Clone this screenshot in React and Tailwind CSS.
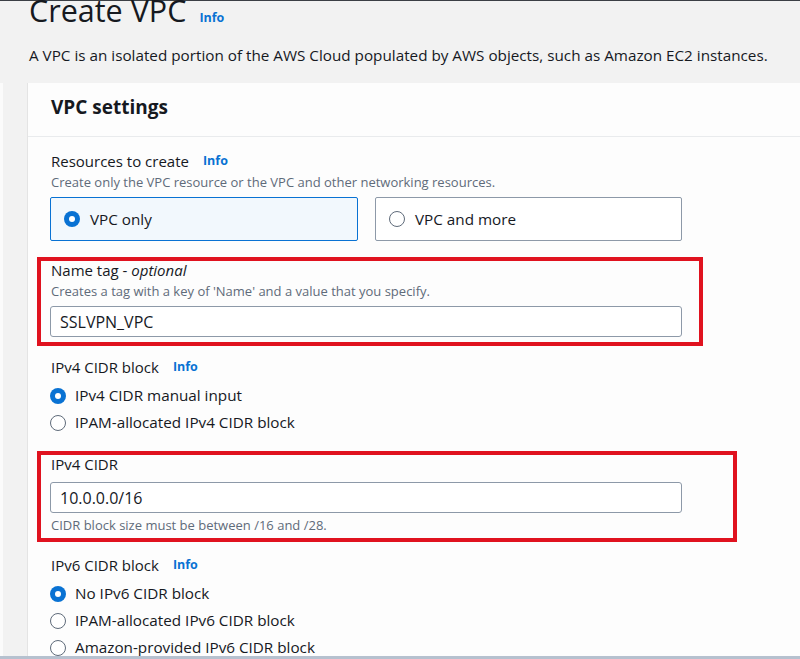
import React from "react";

const font = { fontFamily: '"Open Sans", "Noto Sans", Arial, sans-serif' };

function RadioOn({ className = "" }) {
  return (
    <span className={"flex h-[16px] w-[16px] shrink-0 items-center justify-center rounded-full bg-[#0972d3] " + className}>
      <span className="h-[6px] w-[6px] rounded-full bg-white" />
    </span>
  );
}

function RadioOff({ className = "" }) {
  return <span className={"h-[16px] w-[16px] shrink-0 rounded-full border border-[#5f6b7a] bg-white " + className} />;
}

function Info() {
  return <span className="ml-[14px] text-[12.5px] font-bold text-[#0972d3]">Info</span>;
}

function Label({ children, info }) {
  return (
    <div className="flex h-[20px] items-center pl-px text-[15px] text-[#16191f]">
      <span>{children}</span>
      {info && <Info />}
    </div>
  );
}

function Desc({ children }) {
  return <div className="flex h-[16px] items-center pl-px text-[13px] text-[#5f6b7a]">{children}</div>;
}

function RadioRow({ on, children }) {
  return (
    <div className="flex h-[27px] items-center gap-[9px] text-[15.25px] text-[#16191f]">
      {on ? <RadioOn /> : <RadioOff />}
      <span>{children}</span>
    </div>
  );
}

function Input({ value }) {
  return (
    <div className="flex h-[31px] w-[632px] items-center rounded-[3px] border border-[#8d99a8] bg-white pl-[9px] text-[16px] text-[#16191f]">
      {value}
    </div>
  );
}

export default function App() {
  return (
    <div style={font} className="relative h-[659px] w-[800px] overflow-hidden bg-[#f2f2f2]">
      <div className="h-px bg-[#3b3f45]" />
      <div className="pl-[29px]">
        <div className="mt-[-11px] flex items-baseline">
          <h1 className="text-[30.5px] leading-[40px] font-normal text-[#16191f]">Create VPC</h1>
          <span className="ml-[13px] text-[12.5px] font-bold text-[#0972d3]">Info</span>
        </div>
        <p className="mt-[14px] h-[22px] text-[15.25px] leading-[22px] whitespace-nowrap text-[#16191f]">
          A VPC is an isolated portion of the AWS Cloud populated by AWS objects, such as Amazon EC2 instances.
        </p>
      </div>
      <div className="mt-[17px] flex">
        <div className="h-[600px] w-[3px] bg-[#fbfbfb]" />
        <div className="w-[24px]" />
        <div className="flex-1 border-l border-[#e4e4e4] bg-[#fdfdfd]">
          <div className="h-[54px] border-b border-[#e9ebed] pl-[23px] pt-[10px] text-[19px] leading-[28px] font-bold text-[#16191f]">
            VPC settings
          </div>
          <div className="pl-[22px] pt-[14px]">
            <Label info>Resources to create</Label>
            <div className="mt-[4px]">
              <Desc>Create only the VPC resource or the VPC and other networking resources.</Desc>
            </div>
            <div className="mt-[6px] flex gap-[17px]">
              <div className="flex h-[44px] w-[308px] items-center gap-[10px] rounded-[2px] border border-[#0972d3] bg-[#f2f8fd] pl-[13px] text-[15.25px] text-[#16191f]">
                <RadioOn />
                <span>VPC only</span>
              </div>
              <div className="flex h-[44px] w-[307px] items-center gap-[10px] rounded-[2px] border border-[#8d99a8] bg-white pl-[13px] text-[15.25px] text-[#16191f]">
                <RadioOff />
                <span>VPC and more</span>
              </div>
            </div>

            <div className="relative mt-[19px]">
              <div className="pointer-events-none absolute left-[-13px] top-[-3px] h-[89px] w-[666px] border-4 border-[#e0121f]" />
              <div className="flex h-[20px] items-center pl-px text-[15px] text-[#16191f]">
                Name tag -&nbsp;<span className="italic">optional</span>
              </div>
              <div className="mt-[4px]">
                <Desc>Creates a tag with a key of 'Name' and a value that you specify.</Desc>
              </div>
              <div className="mt-[6px]">
                <Input value="SSLVPN_VPC" />
              </div>
            </div>

            <div className="mt-[20px]">
              <Label info>IPv4 CIDR block</Label>
            </div>
            <div className="mt-[5px]">
              <RadioRow on>IPv4 CIDR manual input</RadioRow>
              <RadioRow>IPAM-allocated IPv4 CIDR block</RadioRow>
            </div>

            <div className="relative mt-[18px]">
              <div className="pointer-events-none absolute left-[-13px] top-[-3px] h-[91px] w-[700px] border-4 border-[#e0121f]" />
              <Label>IPv4 CIDR</Label>
              <div className="mt-[8px]">
                <Input value="10.0.0.0/16" />
              </div>
              <div className="mt-[5px]">
                <Desc>CIDR block size must be between /16 and /28.</Desc>
              </div>
            </div>

            <div className="mt-[21px]">
              <Label info>IPv6 CIDR block</Label>
            </div>
            <div className="mt-[5px]">
              <RadioRow on>No IPv6 CIDR block</RadioRow>
              <RadioRow>IPAM-allocated IPv6 CIDR block</RadioRow>
              <RadioRow>Amazon-provided IPv6 CIDR block</RadioRow>
            </div>
          </div>
        </div>
      </div>
      <div className="absolute bottom-0 left-0 h-[3px] w-full bg-[#b6c1cf]" />
    </div>
  );
}
